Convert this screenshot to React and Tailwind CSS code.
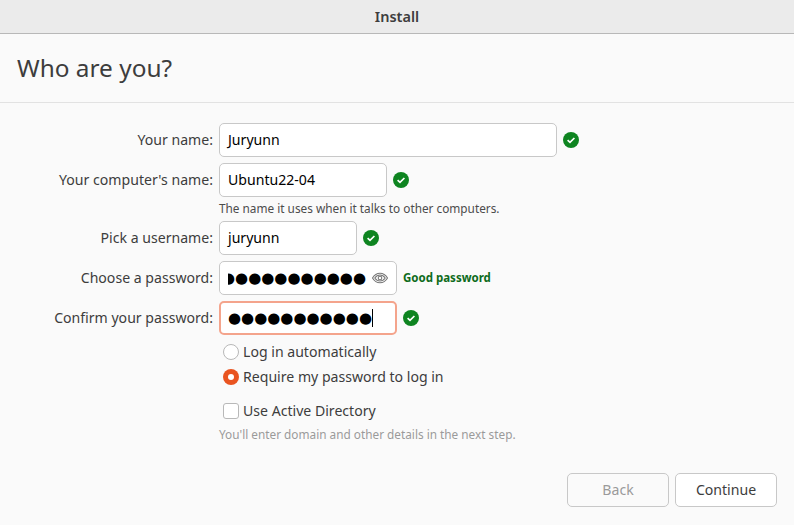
const font = "font-['Noto_Sans',sans-serif]";

function Check() {
  return (
    <svg className="w-4 h-4 shrink-0" viewBox="0 0 16 16" aria-hidden="true">
      <circle cx="8" cy="8" r="8" fill="#0e8420" />
      <path d="M4.6 8.2 7 10.4 11.4 6" fill="none" stroke="#fff" strokeWidth="1.7" />
    </svg>
  );
}

function Eye() {
  return (
    <svg className="w-4 h-4 shrink-0" viewBox="0 0 16 16" fill="none" stroke="#777" strokeWidth="1.1" aria-hidden="true">
      <path d="M.5 8C2.500 4.600 5 3.200 8 3.200s5.500 1.400 7.500 4.800c-2 3.400-4.500 4.800-7.500 4.800S2.500 11.400.5 8z" />
      <path d="M2.800 8C4.200 6 6 5 8 5s3.800 1 5.200 3c-1.400 2-3.200 3-5.200 3s-3.800-1-5.200-3z" />
      <circle cx="8" cy="8" r="1.800" />
    </svg>
  );
}

function Row({ label, children, className = '' }) {
  return (
    <div className={`flex items-center h-[34px] ${className}`}>
      <div className="w-[213px] shrink-0 pb-[1px] text-right text-[14.1px] text-[#3d3d3d]">{label}</div>
      <div className="ml-[6px] flex items-center gap-[6px]">{children}</div>
    </div>
  );
}

function Field({ width, children, focused }) {
  return (
    <div
      className={`${width} h-[34px] rounded-[5px] bg-white flex items-center px-2 overflow-hidden text-[14.1px] text-black ${
        focused ? 'border-2 border-[#f4a48c] px-[7px]' : 'border border-[#c8c8c8]'
      }`}
    >
      {children}
    </div>
  );
}

function Dots({ count }) {
  return (
    <span className="font-['DejaVu_Sans',sans-serif] text-[15px] leading-none whitespace-nowrap">
      {'●'.repeat(count)}
    </span>
  );
}

export default function App() {
  return (
    <div className={`w-[794px] h-[525px] overflow-hidden bg-[#fafafa] flex flex-col ${font}`}>
      <div className="h-[34px] shrink-0 bg-[#ebebeb] border-b border-[#b8b8b8] flex items-center justify-center text-[14.5px] font-semibold text-[#3d3d3d]">
        Install
      </div>

      <div className="h-[69px] shrink-0 border-b border-[#e2e2e2] flex items-center pl-[17px] text-[24.4px] text-[#3d3d3d]">
        Who are you?
      </div>

      <div className="flex flex-col pt-[20px]">
        <Row label="Your name:">
          <Field width="w-[338px]">Juryunn</Field>
          <Check />
        </Row>
        <Row label="Your computer's name:" className="mt-[6px]">
          <Field width="w-[168px]">Ubuntu22-04</Field>
          <Check />
        </Row>
        <div className="ml-[219px] h-[24px] flex items-center pb-[1px] text-[11.8px] text-[#4c4c4c]">
          The name it uses when it talks to other computers.
        </div>
        <Row label="Pick a username:">
          <Field width="w-[138px]">juryunn</Field>
          <Check />
        </Row>
        <Row label="Choose a password:" className="mt-[6px]">
          <div className="w-[178px] h-[34px] rounded-[5px] bg-white border border-[#c8c8c8] flex items-center justify-end pr-[8px] gap-[6px] overflow-hidden text-black">
            <div className="w-[138px] shrink-0 overflow-hidden flex justify-end">
              <Dots count={11} />
            </div>
            <Eye />
          </div>
          <span className="text-[11.500px] font-bold text-[#0e6b1c]">Good password</span>
        </Row>
        <Row label="Confirm your password:" className="mt-[6px]">
          <Field width="w-[178px]" focused>
            <Dots count={11} />
            <span className="w-px h-[18px] bg-black shrink-0" />
          </Field>
          <Check />
        </Row>

        <div className="ml-[223px] mt-[4px] flex flex-col text-[14.1px] text-[#3d3d3d]">
          <label className="h-[25px] flex items-center gap-[4px]">
            <span className="w-4 h-4 rounded-full bg-white border border-[#b8b8b8]" />
            Log in automatically
          </label>
          <label className="h-[25px] flex items-center gap-[4px]">
            <span className="w-4 h-4 rounded-full bg-[#e95420] flex items-center justify-center">
              <span className="w-[6px] h-[6px] rounded-full bg-white" />
            </span>
            Require my password to log in
          </label>
          <label className="h-[25px] mt-[9px] flex items-center gap-[4px]">
            <span className="w-4 h-4 rounded-[3px] bg-white border border-[#b8b8b8]" />
            Use Active Directory
          </label>
        </div>
        <div className="ml-[219px] h-[24px] flex items-center text-[11.8px] text-[#9a9a9a]">
          You'll enter domain and other details in the next step.
        </div>

        <div className="mt-[26px] pr-[17px] flex justify-end gap-[6px] text-[14.1px]">
          <button className="w-[102px] h-[34px] rounded-[5px] border border-[#c8c8c8] bg-[#fafafa] text-[#9a9a9a]">
            Back
          </button>
          <button className="w-[102px] h-[34px] rounded-[5px] border border-[#c8c8c8] bg-white text-[#3d3d3d]">
            Continue
          </button>
        </div>
      </div>
    </div>
  );
}
